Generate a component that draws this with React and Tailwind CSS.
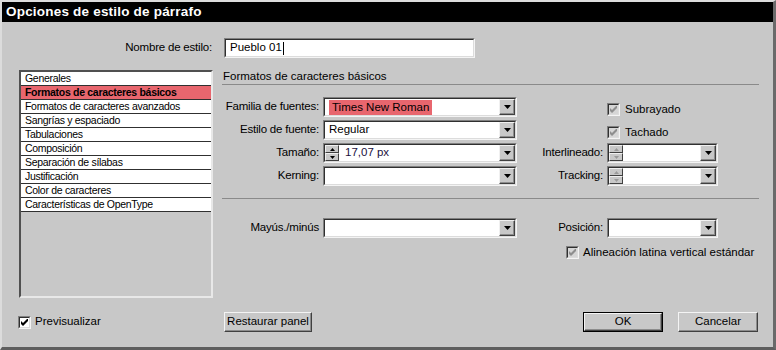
import React from "react";

const items = [
  "Generales",
  "Formatos de caracteres básicos",
  "Formatos de caracteres avanzados",
  "Sangrías y espaciado",
  "Tabulaciones",
  "Composición",
  "Separación de sílabas",
  "Justificación",
  "Color de caracteres",
  "Características de OpenType",
];

const Arrow = () => (
  <div className="flex w-[16px] shrink-0 items-center justify-center border border-t-[#f0f0f0] border-l-[#f0f0f0] border-r-[#404040] border-b-[#404040] bg-[#c8c8c8] shadow-[inset_-1px_-1px_0_#8c8c8c]">
    <svg width="7" height="4" viewBox="0 0 7 4">
      <path d="M0 0h7L3.5 4z" fill="#000" />
    </svg>
  </div>
);

const Spinner = ({ disabled }) => {
  const c = disabled ? "#9a9a9a" : "#000";
  return (
    <div className="flex w-[14px] shrink-0 flex-col">
      <div className="flex flex-1 items-center justify-center border border-t-[#f0f0f0] border-l-[#f0f0f0] border-r-[#404040] border-b-[#404040] bg-[#c8c8c8]">
        <svg width="5" height="3" viewBox="0 0 5 3">
          <path d="M2.5 0L5 3H0z" fill={c} />
        </svg>
      </div>
      <div className="flex flex-1 items-center justify-center border border-t-[#f0f0f0] border-l-[#f0f0f0] border-r-[#404040] border-b-[#404040] bg-[#c8c8c8]">
        <svg width="5" height="3" viewBox="0 0 5 3">
          <path d="M0 0h5L2.5 3z" fill={c} />
        </svg>
      </div>
    </div>
  );
};

const Field = ({ w, spin, disabledSpin, noArrow, children }) => (
  <div className={`flex h-[20px] shrink-0 border border-t-[#808080] border-l-[#808080] border-r-[#f4f4f4] border-b-[#f4f4f4] ${w}`}>
    <div className="flex min-w-0 flex-1 border border-t-[#303030] border-l-[#303030] border-r-[#dcdcdc] border-b-[#dcdcdc] bg-white">
      {spin && <Spinner disabled={disabledSpin} />}
      <div className="flex min-w-0 flex-1 items-center whitespace-nowrap pl-[4px] text-[11.5px] text-black">
        {children}
      </div>
      {!noArrow && <Arrow />}
    </div>
  </div>
);

const Check = ({ disabled }) => (
  <div className="h-[13px] w-[13px] shrink-0 border border-t-[#808080] border-l-[#808080] border-r-[#f4f4f4] border-b-[#f4f4f4]">
    <div className={`flex h-full w-full items-center justify-center border border-t-[#303030] border-l-[#303030] border-r-[#dcdcdc] border-b-[#dcdcdc] ${disabled ? "bg-[#d6d6d6]" : "bg-white"}`}>
      <svg width="7" height="7" viewBox="0 0 7 7">
        <path d="M0 2L2 4L7 -1V2L2 7L0 5Z" fill={disabled ? "#8e8e8e" : "#000"} />
      </svg>
    </div>
  </div>
);

const Button = ({ w, def, children }) => (
  <div className={`flex h-[20px] shrink-0 ${def ? "border border-black" : ""} ${w}`}>
    <div className="flex flex-1 items-center justify-center whitespace-nowrap border border-t-[#f4f4f4] border-l-[#f4f4f4] border-r-[#404040] border-b-[#404040] bg-[#c8c8c8] text-[11.5px] text-black shadow-[inset_-1px_-1px_0_#8c8c8c]">
      {children}
    </div>
  </div>
);

const Label = ({ w, children }) => (
  <div className={`shrink-0 whitespace-nowrap pr-[4px] text-right text-[11.5px] tracking-[-0.2px] text-black ${w}`}>{children}</div>
);

export default function App() {
  return (
    <div className="flex h-[350px] w-[776px] flex-col border-t-2 border-l-2 border-r-[3px] border-b-[3px] border-t-[#dcdcdc] border-l-[#dcdcdc] border-r-[#6a6a6a] border-b-[#5e5e5e] bg-[#c8c8c8] font-['Liberation_Sans',Arial,sans-serif]">
      {/* title bar */}
      <div className="flex h-[20px] shrink-0 items-center bg-black pl-[4px] text-[13.5px] font-bold tracking-[0.2px] text-white">
        Opciones de estilo de párrafo
      </div>

      {/* nombre */}
      <div className="mt-[16px] flex items-center">
        <div className="w-[210px] text-right text-[11.5px] tracking-[-0.2px] text-black">Nombre de estilo:</div>
        <div className="ml-[12px]">
          <Field w="w-[251px]" noArrow>
            Pueblo 01<span className="ml-[1px] inline-block h-[13px] w-px bg-black" />
          </Field>
        </div>
      </div>

      <div className="mt-[12px] flex">
        {/* list */}
        <div className="ml-[17px] flex h-[228px] w-[194px] flex-col border-2 border-t-[#505050] border-l-[#505050] border-r-[#e8e8e8] border-b-[#e8e8e8]">
          {items.map((it, i) => (
            <div
              key={it}
              className={`flex h-[14px] shrink-0 items-center whitespace-nowrap border-b border-[#303030] pl-[4px] text-[10.5px] leading-none tracking-[-0.3px] text-black ${i === 1 ? "bg-[#e8666e] font-bold" : "bg-white"}`}
            >
              {it}
            </div>
          ))}
        </div>

        {/* panel */}
        <div className="ml-[9px] flex w-[537px] flex-col">
          <div className="flex h-[15px] items-center border-b border-[#8a8a8a] pl-[1px] text-[11.5px] text-black">
            Formatos de caracteres básicos
          </div>

          <div className="mt-[12px] flex flex-col gap-[3px]">
            <div className="flex h-[20px] items-center">
              <Label w="w-[101px]">Familia de fuentes:</Label>
              <Field w="w-[194px]">
                <span className="bg-[#e8666e] px-[3px] leading-[15px]">Times New Roman</span>
              </Field>
              <div className="ml-[90px] mt-[5px] flex items-center">
                <Check disabled />
                <span className="ml-[5px] text-[11.5px] text-black">Subrayado</span>
              </div>
            </div>
            <div className="flex h-[20px] items-center">
              <Label w="w-[101px]">Estilo de fuente:</Label>
              <Field w="w-[194px]">Regular</Field>
              <div className="ml-[90px] mt-[5px] flex items-center">
                <Check disabled />
                <span className="ml-[5px] text-[11.5px] text-black">Tachado</span>
              </div>
            </div>
            <div className="flex h-[20px] items-center">
              <Label w="w-[101px]">Tamaño:</Label>
              <Field w="w-[194px]" spin>
                <span className="pl-[2px] text-[#1a1040]">17,07 px</span>
              </Field>
              <Label w="w-[90px]">Interlineado:</Label>
              <Field w="w-[111px]" spin disabledSpin />
            </div>
            <div className="flex h-[20px] items-center">
              <Label w="w-[101px]">Kerning:</Label>
              <Field w="w-[194px]" />
              <Label w="w-[90px]">Tracking:</Label>
              <Field w="w-[111px]" spin disabledSpin />
            </div>
          </div>

          <div className="mt-[12px] h-px w-full bg-[#8a8a8a]" />

          <div className="mt-[19px] flex h-[20px] items-center">
            <Label w="w-[101px]">Mayús./minús</Label>
            <Field w="w-[194px]" />
            <Label w="w-[90px]">Posición:</Label>
            <Field w="w-[111px]" />
          </div>
          <div className="mt-[6px] flex items-center pl-[344px]">
            <Check disabled />
            <span className="ml-[4px] text-[11.5px] text-black">Alineación latina vertical estándar</span>
          </div>
        </div>
      </div>

      {/* bottom */}
      <div className="mt-[14px] flex h-[20px] items-center pr-[15px]">
        <div className="flex w-[222px] items-center pl-[16px]">
          <Check />
          <span className="ml-[4px] text-[11.5px] text-black">Previsualizar</span>
        </div>
        <Button w="w-[88px]">Restaurar panel</Button>
        <div className="ml-auto">
          <Button w="w-[80px]" def>OK</Button>
        </div>
        <div className="ml-[15px]">
          <Button w="w-[80px]">Cancelar</Button>
        </div>
      </div>
    </div>
  );
}
